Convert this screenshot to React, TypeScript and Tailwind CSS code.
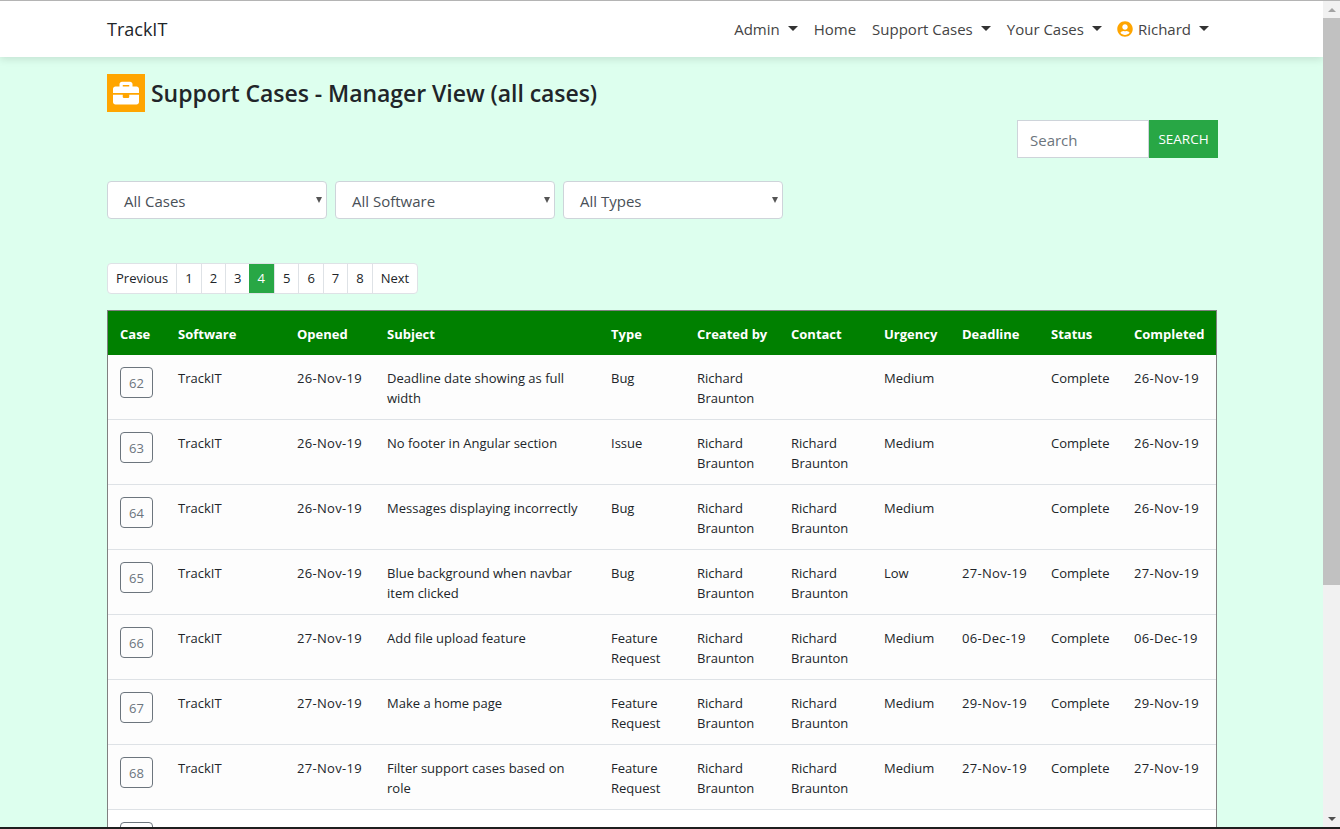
import React from "react";
import { FaBriefcase, FaUserCircle } from "react-icons/fa";

const navLinks = [
  { text: "Admin", caret: true },
  { text: "Home", caret: false },
  { text: "Support Cases", caret: true },
  { text: "Your Cases", caret: true },
];

const filters = ["All Cases", "All Software", "All Types"];
const pages = ["Previous", "1", "2", "3", "4", "5", "6", "7", "8", "Next"];

const columns = [
  { text: "Case", width: "w-[58px]" },
  { text: "Software", width: "w-[119px]" },
  { text: "Opened", width: "w-[90px]" },
  { text: "Subject", width: "w-[224px]" },
  { text: "Type", width: "w-[86px]" },
  { text: "Created by", width: "w-[94px]" },
  { text: "Contact", width: "w-[93px]" },
  { text: "Urgency", width: "w-[78px]" },
  { text: "Deadline", width: "w-[89px]" },
  { text: "Status", width: "w-[83px]" },
  { text: "Completed", width: "w-[94px]" },
];

const RB = "Richard Braunton";

const cases = [
  { id: 62, opened: "26-Nov-19", subject: "Deadline date showing as full width", type: "Bug", contact: "", urgency: "Medium", deadline: "", completed: "26-Nov-19" },
  { id: 63, opened: "26-Nov-19", subject: "No footer in Angular section", type: "Issue", contact: RB, urgency: "Medium", deadline: "", completed: "26-Nov-19" },
  { id: 64, opened: "26-Nov-19", subject: "Messages displaying incorrectly", type: "Bug", contact: RB, urgency: "Medium", deadline: "", completed: "26-Nov-19" },
  { id: 65, opened: "26-Nov-19", subject: "Blue background when navbar item clicked", type: "Bug", contact: RB, urgency: "Low", deadline: "27-Nov-19", completed: "27-Nov-19" },
  { id: 66, opened: "27-Nov-19", subject: "Add file upload feature", type: "Feature Request", contact: RB, urgency: "Medium", deadline: "06-Dec-19", completed: "06-Dec-19" },
  { id: 67, opened: "27-Nov-19", subject: "Make a home page", type: "Feature Request", contact: RB, urgency: "Medium", deadline: "29-Nov-19", completed: "29-Nov-19" },
  { id: 68, opened: "27-Nov-19", subject: "Filter support cases based on role", type: "Feature Request", contact: RB, urgency: "Medium", deadline: "27-Nov-19", completed: "27-Nov-19" },
];

const Caret = () => (
  <span className="ml-2 inline-block h-0 w-0 translate-y-[-1px] border-x-[5px] border-t-[5px] border-x-transparent border-t-[#333]" />
);

const CaseButton = ({ id }: { id?: number }) => (
  <span className="flex h-[31px] w-[33px] items-center justify-center rounded border border-[#6c757d] text-[13px] text-[#6c757d]">
    {id}
  </span>
);

const Cell = ({ children }: { children?: React.ReactNode }) => (
  <td className="border-b border-[#dee2e6] px-3 pt-[13px] pb-[11px] align-top">{children}</td>
);

const DateCell = ({ children }: { children?: React.ReactNode }) => (
  <td className="border-b border-[#dee2e6] px-3 pt-[13px] pb-[11px] align-top tracking-[0.3px]">{children}</td>
);

const App = () => {
  return (
    <div className="flex h-[829px] w-[1340px] flex-col overflow-hidden bg-[#ddffee] font-['Open_Sans',sans-serif] text-[#212529]">
      <div className="h-px bg-[#b4b4b4]" />
      <div className="flex min-h-0 flex-1">
        <main className="min-w-0 flex-1 overflow-hidden">
          <nav className="relative h-14 bg-white shadow-[0_2px_8px_rgba(0,0,0,0.12)]">
            <div className="ml-[107px] flex h-full w-[1111px] items-center justify-between">
              <span className="text-[18px]">TrackIT</span>
              <div className="flex items-center gap-4 pr-[9px] text-[15px] text-[#444]">
                {navLinks.map((link) => (
                  <span key={link.text} className="flex items-center">
                    {link.text}
                    {link.caret && <Caret />}
                  </span>
                ))}
                <span className="-ml-px flex items-center">
                  <FaUserCircle className="mr-[5px] text-[16px] text-[#ffa500]" />
                  Richard
                  <Caret />
                </span>
              </div>
            </div>
          </nav>

          <div className="ml-[107px] w-[1111px]">
            <div className="mt-[17px] flex items-center gap-[6px]">
              <span className="flex h-[38px] w-[38px] items-center justify-center bg-[#ffa500]">
                <FaBriefcase className="text-[26px] text-white" />
              </span>
              <h1 className="text-[23px] font-semibold tracking-[-0.05px]">Support Cases - Manager View (all cases)</h1>
            </div>

            <div className="mt-2 flex justify-end">
              <input
                placeholder="Search"
                className="h-[38px] w-[132px] border border-[#ced4da] bg-white px-3 pt-[2px] text-[15px] placeholder:text-[#6c757d]"
              />
              <button className="h-[38px] w-[69px] bg-[#28a745] pt-[1px] text-[13.5px] text-white">SEARCH</button>
            </div>

            <div className="mt-[23px] flex gap-2">
              {filters.map((filter) => (
                <div
                  key={filter}
                  className="relative flex h-[38px] w-[220px] items-center rounded border border-[#ced4da] bg-white pt-[2px] pl-4 text-[15px] text-[#495057]"
                >
                  {filter}
                  <span className="absolute top-[15px] right-[4px] h-0 w-0 border-x-[3.5px] border-t-[6px] border-x-transparent border-t-[#555]" />
                </div>
              ))}
            </div>

            <div className="mt-11 flex h-[31px] w-fit overflow-hidden rounded border border-[#dee2e6] bg-white text-[13px]">
              {pages.map((page) => (
                <span
                  key={page}
                  className={`flex items-center border-l px-2 first:border-l-0 ${
                    page === "4"
                      ? "-ml-px border-[#28a745] bg-[#28a745] pr-[9px] text-white"
                      : "border-[#dee2e6] text-[#212529]"
                  }`}
                >
                  {page}
                </span>
              ))}
            </div>

            <table className="mt-4 w-[1110px] table-fixed border-separate border-spacing-0 border border-[#808080] bg-white text-[13px] leading-5">
              <thead>
                <tr className="h-[44px] bg-[#008000] text-white">
                  {columns.map((col) => (
                    <th key={col.text} className={`${col.width} px-3 pt-[1px] text-left font-bold whitespace-nowrap`}>
                      {col.text}
                    </th>
                  ))}
                </tr>
              </thead>
              <tbody>
                {cases.map((row) => (
                  <tr key={row.id} className="h-[65px] bg-[#fdfdfd]">
                    <td className="border-b border-[#dee2e6] px-3 py-3 align-top">
                      <CaseButton id={row.id} />
                    </td>
                    <Cell>TrackIT</Cell>
                    <DateCell>{row.opened}</DateCell>
                    <Cell>{row.subject}</Cell>
                    <Cell>{row.type}</Cell>
                    <Cell>{RB}</Cell>
                    <Cell>{row.contact}</Cell>
                    <Cell>{row.urgency}</Cell>
                    <DateCell>{row.deadline}</DateCell>
                    <Cell>Complete</Cell>
                    <DateCell>{row.completed}</DateCell>
                  </tr>
                ))}
                <tr>
                  <td className="px-3 py-3 align-top">
                    <CaseButton />
                  </td>
                </tr>
              </tbody>
            </table>
          </div>
        </main>

        <div className="flex w-[17px] flex-col bg-[#f1f1f1]">
          <div className="flex h-[17px] items-center justify-center">
            <span className="h-0 w-0 border-x-4 border-b-4 border-x-transparent border-b-[#a3a3a3]" />
          </div>
          <div className="h-[567px] bg-[#c1c1c1]" />
          <div className="flex-1" />
          <div className="flex h-[17px] items-center justify-center">
            <span className="h-0 w-0 border-x-4 border-t-4 border-x-transparent border-t-[#505050]" />
          </div>
        </div>
      </div>
      <div className="h-[2px] bg-[#1f1f1f]" />
    </div>
  );
};

export default App;
